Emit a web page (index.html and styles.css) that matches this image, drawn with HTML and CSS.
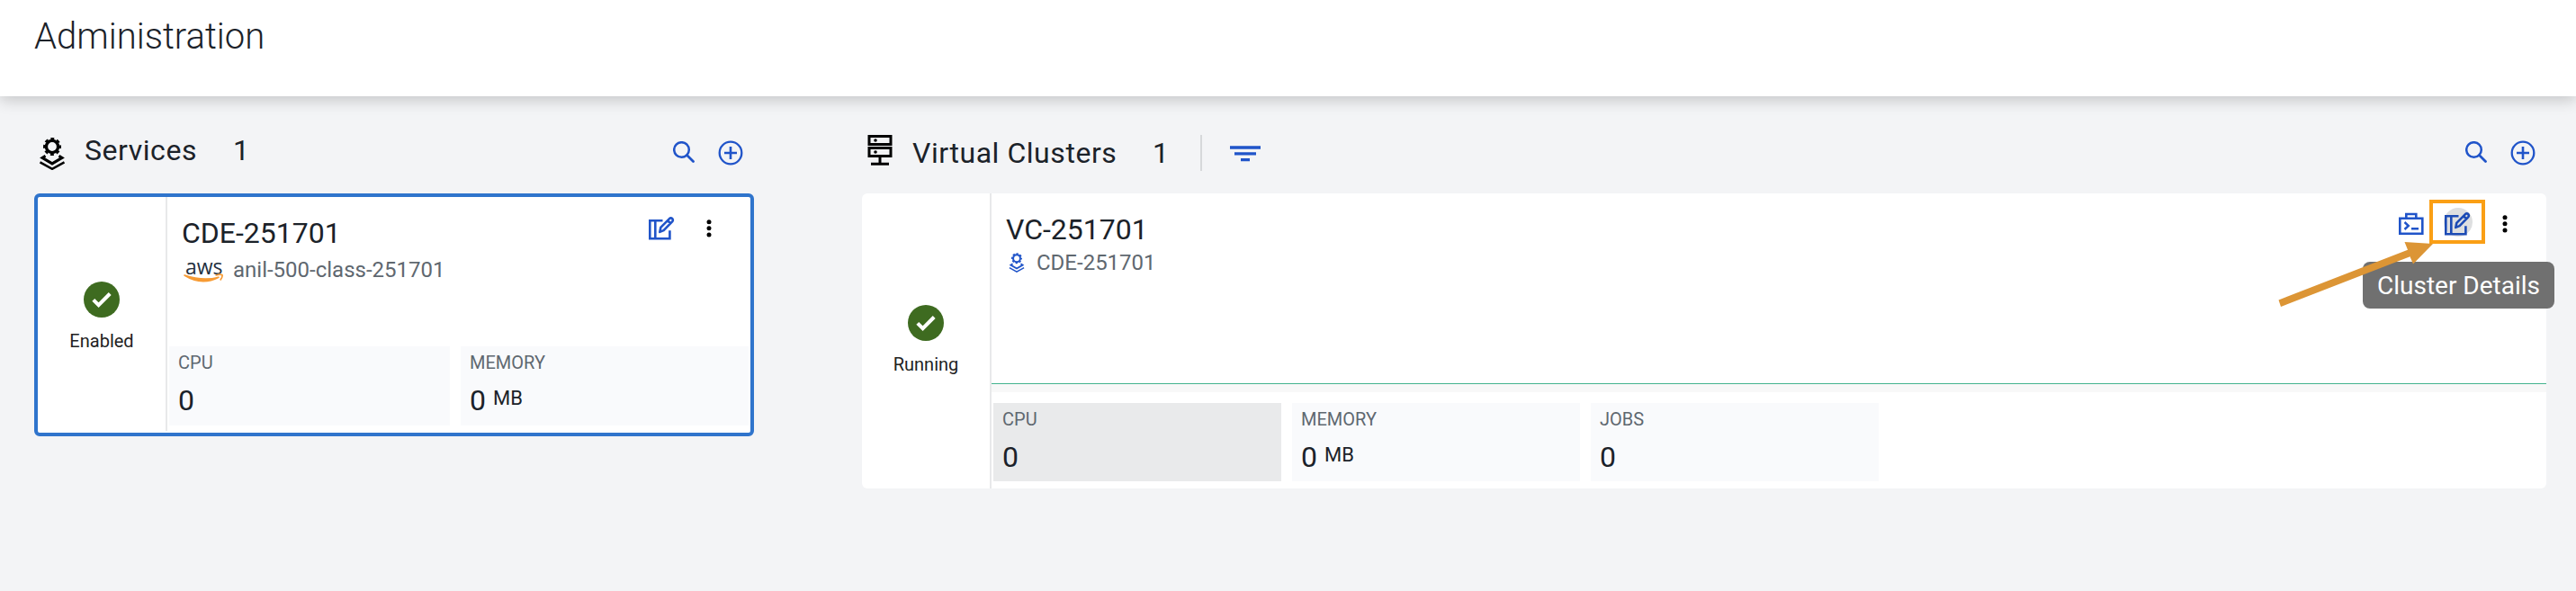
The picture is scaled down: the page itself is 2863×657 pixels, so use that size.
FILE: index.html
```html
<!DOCTYPE html>
<html lang="en">
<head>
<meta charset="utf-8">
<title>Administration</title>
<link rel="stylesheet" href="styles.css">
</head>
<body>
<svg class="defs" width="0" height="0">
  <symbol id="i-service" viewBox="0 0 30 36">
    <g fill="none" stroke="currentColor">
      <circle cx="15" cy="10" r="6.6" stroke-width="3.4"/>
      <circle cx="15" cy="10" r="8.8" stroke-width="2.4" stroke-dasharray="3.9 3.01" stroke-dashoffset="1.95"/>
      <path d="M7.500 20.200L4 22.400L15 28.900L26 22.400L22.500 20.200" stroke-width="3"/>
      <path d="M1.500 27.300L15 34.800L28.500 27.300" stroke-width="2.500"/>
    </g>
  </symbol>
  <symbol id="i-cluster" viewBox="0 0 28 34">
    <path fill="none" stroke="currentColor" stroke-width="3" d="M2 1.500H26V10.500H2ZM2 14.500H26V23.500H2ZM14 23.500V31M4 32.300H24"/>
    <circle cx="9" cy="6" r="1.800" fill="currentColor"/><circle cx="9" cy="19" r="1.800" fill="currentColor"/>
  </symbol>
  <symbol id="i-search" viewBox="0 0 24 24">
    <circle cx="9.500" cy="9.500" r="8.300" fill="none" stroke="currentColor" stroke-width="2.500"/>
    <path d="M15.500 15.500L22.500 22.500" stroke="currentColor" stroke-width="2.800" stroke-linecap="round"/>
  </symbol>
  <symbol id="i-add" viewBox="0 0 28 28">
    <circle cx="14" cy="14" r="12.300" fill="none" stroke="currentColor" stroke-width="2.300"/>
    <path d="M14 7V21M7 14H21" stroke="currentColor" stroke-width="2.600"/>
  </symbol>
  <symbol id="i-edit" viewBox="0 0 30 27">
    <g fill="none" stroke="currentColor" stroke-width="2.600">
      <path d="M16.500 4.300H2.300V24.300H24.400V15.200M8.300 4.300V24.300"/>
      <path d="M13.300 16.900L14.300 11.900L24 2.100Q25.600 .8 27.200 2.100Q28.500 3.700 27.100 5.300L17.600 15.100ZM22 4.200L25.200 7.300" stroke-linejoin="round"/>
    </g>
  </symbol>
  <symbol id="i-more" viewBox="0 0 6 22">
    <circle cx="3" cy="3.700" r="2.500"/><circle cx="3" cy="10.800" r="2.500"/><circle cx="3" cy="17.900" r="2.500"/>
  </symbol>
  <symbol id="i-console" viewBox="0 0 28 26">
    <path d="M1.300 6.800H26.300V23.700H1.300ZM8.300 6.800V2H19.300V6.800" fill="none" stroke="currentColor" stroke-width="2.600"/>
    <path d="M6.500 11L10.800 15L6.500 19M14 18.200H22" fill="none" stroke="currentColor" stroke-width="2.400"/>
  </symbol>
  <symbol id="i-check" viewBox="0 0 40 40">
    <circle cx="20" cy="20" r="20" fill="#3e6b20"/>
    <path d="M10.800 20.400L16.600 26.100L29.200 13.500" fill="none" stroke="#fff" stroke-width="4.100"/>
  </symbol>
</svg>

<header class="header"><h1 class="title">Administration</h1></header>

<main class="main">
  <section class="services">
    <div class="bar bar-services">
      <svg class="ic-service"><use href="#i-service"/></svg>
      <h2 class="heading">Services</h2>
      <span class="count">1</span>
      <div class="tools">
        <svg class="ic-search"><use href="#i-search"/></svg>
        <svg class="ic-add"><use href="#i-add"/></svg>
      </div>
    </div>
    <article class="card selected">
      <div class="status">
        <svg class="ic-check"><use href="#i-check"/></svg>
        <span>Enabled</span>
      </div>
      <div class="body">
        <div class="top">
          <div class="names">
            <h3 class="name">CDE-251701</h3>
            <div class="sub">
              <span class="aws"><span class="aws-word">aws</span>
                <svg class="aws-smile" viewBox="0 0 45 11"><path d="M1 2Q20 14 39 4.200Q22 9 1 2Z" fill="#f79b34" stroke="#f79b34" stroke-width="1.600" stroke-linejoin="round"/><path d="M35.500 2.200Q41 .5 43 1.700Q43.600 3.700 40.800 7.500" fill="none" stroke="#f79b34" stroke-width="1.700"/></svg>
              </span>
              <span class="env">anil-500-class-251701</span>
            </div>
          </div>
          <div class="actions">
            <svg class="ic-edit"><use href="#i-edit"/></svg>
            <svg class="ic-more"><use href="#i-more"/></svg>
          </div>
        </div>
        <div class="tiles">
          <div class="tile"><span class="label">CPU</span><span class="value">0</span></div>
          <div class="tile"><span class="label">MEMORY</span><span class="value">0<small>MB</small></span></div>
        </div>
      </div>
    </article>
  </section>

  <section class="clusters">
    <div class="bar bar-clusters">
      <svg class="ic-cluster"><use href="#i-cluster"/></svg>
      <h2 class="heading">Virtual Clusters</h2>
      <span class="count">1</span>
      <span class="rule"></span>
      <svg class="ic-filter" viewBox="0 0 34 18"><path d="M0 2H34M5 8.900H29M12 15.600H22" stroke="#2054c9" stroke-width="3.400"/></svg>
      <div class="tools">
        <svg class="ic-search"><use href="#i-search"/></svg>
        <svg class="ic-add"><use href="#i-add"/></svg>
      </div>
    </div>
    <article class="card cluster">
      <div class="status">
        <svg class="ic-check"><use href="#i-check"/></svg>
        <span>Running</span>
      </div>
      <div class="body">
        <div class="top">
          <div class="names">
            <h3 class="name">VC-251701</h3>
            <div class="sub">
              <svg class="ic-mini"><use href="#i-service"/></svg>
              <span class="env">CDE-251701</span>
            </div>
          </div>
          <div class="actions">
            <svg class="ic-console"><use href="#i-console"/></svg>
            <span class="hover"><svg class="ic-edit"><use href="#i-edit"/></svg></span>
            <svg class="ic-more"><use href="#i-more"/></svg>
          </div>
        </div>
        <div class="chart"></div>
        <div class="tiles">
          <div class="tile active"><span class="label">CPU</span><span class="value">0</span></div>
          <div class="tile"><span class="label">MEMORY</span><span class="value">0<small>MB</small></span></div>
          <div class="tile"><span class="label">JOBS</span><span class="value">0</span></div>
        </div>
      </div>
      <div class="tooltip">Cluster Details</div>
      <div class="frame"></div>
      <svg class="arrow" viewBox="0 0 174 72"><path d="M2.500 64.500L146 8.800L142.500 0L174 2L152 24.500L148.500 16.200L5 72Z" fill="#dc9535"/></svg>
    </article>
  </section>
</main>
</body>
</html>
```

FILE: styles.css
```css
* { box-sizing: border-box; }
body {
  margin: 0;
  height: 657px;
  overflow: hidden;
  background: #f3f4f6;
  color: #1b2229;
  font-family: Roboto, "Liberation Sans", sans-serif;
  display: flex;
  flex-direction: column;
}
svg { display: block; flex: none; }
.defs { position: absolute; }
h1, h2, h3 { margin: 0; font-weight: 400; }

.header {
  height: 107px;
  flex: none;
  padding: 17px 0 0 38px;
  background: #fff;
  box-shadow: 0 4px 16px rgba(0, 0, 0, .2);
}
.title { font-size: 40px; line-height: 48px; font-weight: 300; }

.main { display: flex; gap: 120px; padding: 0 33px 0 38px; }
.services { width: 800px; flex: none; }
.clusters { flex: 1; }

.bar { display: flex; height: 108px; }
.heading, .count { font-size: 32px; line-height: 40px; letter-spacing: .55px; }
.bar-services .heading, .bar-services .count { margin-top: 40px; }
.bar-services .heading { width: 165px; margin-left: 21px; }
.bar-clusters .heading, .bar-clusters .count { margin-top: 43px; }
.bar-clusters .heading { width: 267px; margin-left: 22px; }
.bar-clusters .count { width: 53px; }
.tools { margin-left: auto; display: flex; gap: 26px; padding: 49px 12px 0 0; color: #2054c9; }
.ic-service { width: 30px; height: 36px; margin: 46px 0 0 5px; color: #000; }
.ic-cluster { width: 28px; height: 34px; margin: 43px 0 0 6px; color: #000; }
.ic-search { width: 24px; height: 24px; margin-top: 1px; }
.ic-add { width: 28px; height: 28px; }
.rule { width: 2px; height: 40px; margin-top: 43px; background: #d6d8da; }
.ic-filter { width: 34px; height: 18px; margin: 55px 0 0 31px; }

.card { display: flex; position: relative; background: #fff; border-radius: 6px; }
.selected { height: 270px; border: 4px solid #2f74cc; padding-bottom: 2px; }
.cluster { height: 328px; }
.status {
  width: 144px;
  flex: none;
  border-right: 2px solid #e8e9ea;
  display: flex;
  flex-direction: column;
  align-items: center;
  font-size: 20px;
  line-height: 24px;
  color: #222;
}
.status span { margin-top: 14px; }
.ic-check { width: 40px; height: 40px; }
.selected .status { padding-top: 94px; }
.cluster .status { padding-top: 124px; }
.body { flex: 1; display: flex; flex-direction: column; }

.top { display: flex; justify-content: space-between; padding: 20px 0 0 16px; }
.selected .top { height: 166px; }
.cluster .top { height: 211px; }
.name { font-size: 32px; line-height: 40px; }
.sub { display: flex; margin-top: 7px; height: 28px; color: #5f6870; }
.env { font-size: 24px; line-height: 28px; }
.aws { width: 55px; margin-left: 2px; color: #232f3e; }
.aws-word {
  display: block;
  padding-left: 2px;
  font: 500 23px/20px "Open Sans", sans-serif;
  letter-spacing: -.1px;
}
.aws-smile { width: 45px; height: 11px; margin-top: -2px; }
.cluster .sub { margin-top: 3px; }
.ic-mini { width: 18px; height: 22px; margin: 3px 13px 0 3px; color: #2054c9; }

.actions { display: flex; color: #2054c9; }
.ic-edit { width: 30px; height: 27px; }
.ic-more { width: 6px; height: 22px; fill: #000; }
.selected .actions { padding: 2px 43px 0 0; gap: 35px; }
.selected .ic-more { margin-top: 2px; }
.cluster .actions { padding: 0 43px 0 0; margin-top: -5px; }
.ic-console { width: 28px; height: 26px; margin-top: 6px; }
.hover {
  width: 32px;
  height: 32px;
  margin: 1px 33px 0 22px;
  padding: 5px 0 0 0;
  border-radius: 50%;
  background: #dedfe0;
  color: #1c4bb5;
}
.cluster .ic-more { margin-top: 8px; }

.chart { height: 10px; background: #f8f8f8; border-top: 1px solid #44b38f; }
.tiles { display: flex; gap: 12px; padding-left: 2px; }
.cluster .tiles { margin-top: 12px; }
.tile { width: 320px; height: 88px; padding: 6px 0 0 10px; background: #f9fafc; }
.cluster .tile { height: 87px; }
.selected .tile:first-child { width: 312px; }
.tile.active { background: #e9eaeb; }
.label { display: block; font-size: 20px; line-height: 24px; color: #5f6870; }
.value { display: flex; margin-top: 10px; font-size: 32px; line-height: 40px; }
.value small { margin-left: 8px; font-size: 22px; line-height: 36px; }

.tooltip {
  position: absolute;
  left: 1668px;
  top: 76px;
  width: 213px;
  height: 52px;
  padding-left: 16px;
  border-radius: 8px;
  background: #707070;
  color: #fff;
  font-size: 28px;
  line-height: 53px;
  white-space: nowrap;
}
.frame { position: absolute; left: 1742px; top: 7px; width: 62px; height: 49px; border: 4px solid #fa9f15; }
.arrow { position: absolute; left: 1572px; top: 54px; width: 174px; height: 72px; }
```
